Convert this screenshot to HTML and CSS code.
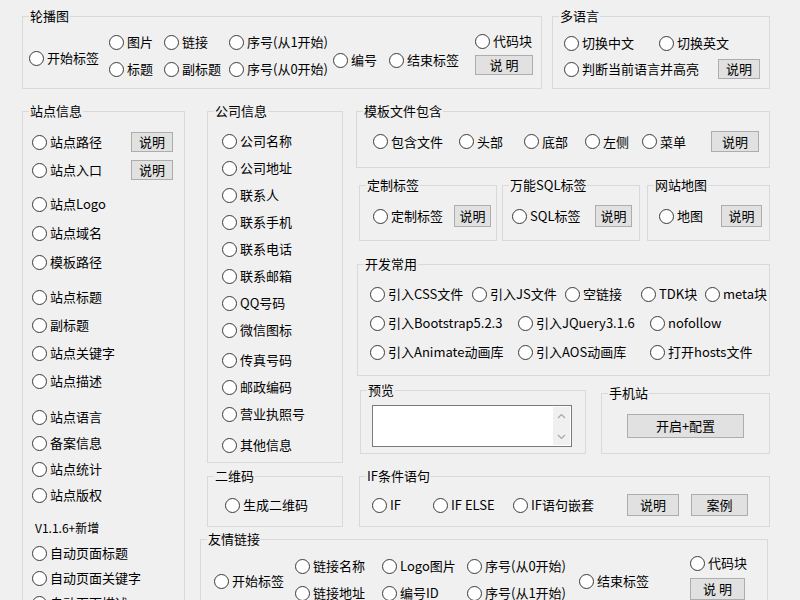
FILE: index.html
```html
<!DOCTYPE html>
<html lang="zh-CN">
<head>
<meta charset="utf-8">
<title>标签生成器</title>
<link rel="stylesheet" href="styles.css">
</head>
<body>
<div class="page">
  <div class="top-row">
    <div class="group carousel">
      <span class="group-title">轮播图</span>
      <div class="carousel-grid">
        <span class="radio span2 drop16">开始标签</span>
        <span class="radio">图片</span>
        <span class="radio">链接</span>
        <span class="radio">序号(从1开始)</span>
        <span class="radio span2c5 drop18">编号</span>
        <span class="radio span2c6 drop18">结束标签</span>
        <div class="code-col">
          <span class="radio">代码块</span>
          <span class="btn btn-code">说 明</span>
        </div>
        <span class="radio r2c2">标题</span>
        <span class="radio r2c3">副标题</span>
        <span class="radio r2c4">序号(从0开始)</span>
      </div>
    </div>
    <div class="group lang">
      <span class="group-title">多语言</span>
      <div class="lang-row">
        <span class="radio w95">切换中文</span>
        <span class="radio">切换英文</span>
      </div>
      <div class="lang-row">
        <span class="radio w154">判断当前语言并高亮</span>
        <span class="btn btn-42">说明</span>
      </div>
    </div>
  </div>

  <div class="main">
    <div class="group site">
      <span class="group-title">站点信息</span>
      <div class="sec sec-1">
        <div class="line"><span class="radio">站点路径</span><span class="btn btn-42">说明</span></div>
        <div class="line"><span class="radio">站点入口</span><span class="btn btn-42">说明</span></div>
      </div>
      <div class="sec sec-2">
        <span class="radio">站点Logo</span>
        <span class="radio">站点域名</span>
        <span class="radio">模板路径</span>
      </div>
      <div class="sec sec-3">
        <span class="radio">站点标题</span>
        <span class="radio">副标题</span>
        <span class="radio">站点关键字</span>
        <span class="radio">站点描述</span>
      </div>
      <div class="sec sec-4">
        <span class="radio">站点语言</span>
        <span class="radio">备案信息</span>
        <span class="radio">站点统计</span>
        <span class="radio">站点版权</span>
      </div>
      <div class="sec sec-5">
        <span class="note">V1.1.6+新增</span>
        <span class="radio">自动页面标题</span>
        <span class="radio">自动页面关键字</span>
        <span class="radio">自动页面描述</span>
      </div>
    </div>

    <div class="right-block">
      <div class="sub-row">
        <div class="mid-col">
          <div class="group company">
            <span class="group-title">公司信息</span>
            <span class="radio">公司名称</span>
            <span class="radio">公司地址</span>
            <span class="radio">联系人</span>
            <span class="radio">联系手机</span>
            <span class="radio">联系电话</span>
            <span class="radio">联系邮箱</span>
            <span class="radio">QQ号码</span>
            <span class="radio">微信图标</span>
            <span class="radio push3">传真号码</span>
            <span class="radio">邮政编码</span>
            <span class="radio">营业执照号</span>
            <span class="radio push4">其他信息</span>
          </div>
          <div class="group qr">
            <span class="group-title">二维码</span>
            <span class="radio">生成二维码</span>
          </div>
        </div>

        <div class="right-col">
          <div class="group tpl">
            <span class="group-title">模板文件包含</span>
            <span class="radio">包含文件</span>
            <span class="radio">头部</span>
            <span class="radio">底部</span>
            <span class="radio">左侧</span>
            <span class="radio">菜单</span>
            <span class="btn btn-tpl">说明</span>
          </div>

          <div class="custom-row">
            <div class="group small custom">
              <span class="group-title">定制标签</span>
              <span class="radio">定制标签</span>
              <span class="btn btn-37">说明</span>
            </div>
            <div class="group small sql">
              <span class="group-title">万能SQL标签</span>
              <span class="radio">SQL标签</span>
              <span class="btn btn-37">说明</span>
            </div>
            <div class="group small sitemap">
              <span class="group-title">网站地图</span>
              <span class="radio">地图</span>
              <span class="btn btn-41">说明</span>
            </div>
          </div>

          <div class="group dev">
            <span class="group-title">开发常用</span>
            <div class="dev-row dev-row-1">
              <span class="radio">引入CSS文件</span>
              <span class="radio">引入JS文件</span>
              <span class="radio">空链接</span>
              <span class="radio">TDK块</span>
              <span class="radio">meta块</span>
            </div>
            <div class="dev-row">
              <span class="radio">引入Bootstrap5.2.3</span>
              <span class="radio">引入JQuery3.1.6</span>
              <span class="radio">nofollow</span>
            </div>
            <div class="dev-row">
              <span class="radio">引入Animate动画库</span>
              <span class="radio">引入AOS动画库</span>
              <span class="radio">打开hosts文件</span>
            </div>
          </div>

          <div class="preview-row">
            <div class="group preview">
              <span class="group-title">预览</span>
              <div class="textbox">
                <div class="textbox-area"></div>
                <div class="scroll">
                  <svg width="9" height="6" viewBox="0 0 9 6"><path d="M1 5 L4.5 1.5 L8 5" fill="none" stroke="#a6a6a6" stroke-width="1.2"/></svg>
                  <svg width="9" height="6" viewBox="0 0 9 6"><path d="M1 1 L4.5 4.5 L8 1" fill="none" stroke="#a6a6a6" stroke-width="1.2"/></svg>
                </div>
              </div>
            </div>
            <div class="group mobile">
              <span class="group-title">手机站</span>
              <span class="btn btn-mobile">开启+配置</span>
            </div>
          </div>

          <div class="group ifs">
            <span class="group-title">IF条件语句</span>
            <span class="radio">IF</span>
            <span class="radio">IF ELSE</span>
            <span class="radio">IF语句嵌套</span>
            <span class="btn btn-52">说明</span>
            <span class="btn btn-57">案例</span>
          </div>
        </div>
      </div>

      <div class="group links">
        <span class="group-title">友情链接</span>
        <div class="links-grid">
          <span class="radio span2 drop15">开始标签</span>
          <span class="radio">链接名称</span>
          <span class="radio">Logo图片</span>
          <span class="radio">序号(从0开始)</span>
          <span class="radio span2c5 drop15">结束标签</span>
          <div class="code-col links-code">
            <span class="radio">代码块</span>
            <span class="btn btn-links">说 明</span>
          </div>
          <span class="radio r2c2">链接地址</span>
          <span class="radio r2c3">编号ID</span>
          <span class="radio r2c4">序号(从1开始)</span>
        </div>
      </div>
    </div>
  </div>
</div>
</body>
</html>
```

FILE: styles.css
```css
* { box-sizing: border-box; }

html, body {
  margin: 0;
  padding: 0;
}

body {
  width: 800px;
  height: 600px;
  overflow: hidden;
  background: #f0f0f0;
  color: #000;
  font-family: "Noto Sans CJK SC", "Microsoft YaHei", sans-serif;
  font-size: 13px;
  line-height: 16px;
}

.page {
  padding: 16px 0 0 22px;
}

/* ---------- shared controls ---------- */
.group {
  position: relative;
  border: 1px solid #d9d9d9;
}

.group-title {
  position: absolute;
  top: -9px;
  left: 6px;
  padding: 0 1px;
  background: #f0f0f0;
  line-height: 16px;
  white-space: nowrap;
}

.radio {
  display: flex;
  align-items: center;
  gap: 3px;
  height: 20px;
  white-space: nowrap;
}

.radio::before {
  content: "";
  flex: none;
  width: 13px;
  height: 13px;
  border: 1px solid #3a3a3a;
  border-radius: 50%;
  background: #fff;
}

.btn {
  display: flex;
  align-items: center;
  justify-content: center;
  height: 20px;
  border: 1px solid #adadad;
  background: #e1e1e1;
  white-space: nowrap;
}

.btn-42 { width: 42px; }
.btn-37 { width: 37px; height: 22px; }
.btn-41 { width: 41px; height: 22px; }
.btn-52 { width: 52px; height: 22px; }
.btn-57 { width: 57px; height: 22px; }
.btn-tpl { width: 48px; height: 21px; }
.btn-code { width: 58px; }
.btn-links { width: 55px; height: 22px; }
.btn-mobile { width: 117px; height: 24px; }

/* ---------- top row ---------- */
.top-row {
  display: flex;
  gap: 10px;
}

.carousel {
  width: 520px;
  height: 73px;
  padding: 15px 0 0 6px;
}

.carousel-grid,
.links-grid {
  display: grid;
  grid-template-rows: 20px 20px;
  row-gap: 7px;
}

.carousel-grid {
  grid-template-columns: 80px 55px 65px 104px 56px 86px auto;
}

.links-grid {
  grid-template-columns: 81px 87px 85px 112px 111px auto;
}

.span2 { grid-column: 1; grid-row: 1 / 3; align-self: start; }
.span2c5 { grid-column: 5; grid-row: 1 / 3; align-self: start; }
.span2c6 { grid-column: 6; grid-row: 1 / 3; align-self: start; }
.r2c2 { grid-row: 2; grid-column: 2; }
.r2c3 { grid-row: 2; grid-column: 3; }
.r2c4 { grid-row: 2; grid-column: 4; }
.drop15 { margin-top: 15px; }
.drop16 { margin-top: 16px; }
.drop18 { margin-top: 18px; }

.code-col {
  grid-row: 1 / 3;
  display: flex;
  flex-direction: column;
  gap: 4px;
  margin-top: -1px;
}

.links-code {
  grid-column: 6;
  margin-top: -3px;
  gap: 5px;
}

.lang {
  width: 218px;
  height: 73px;
  padding: 16px 0 0 11px;
  display: flex;
  flex-direction: column;
  gap: 6px;
}

.lang-row {
  display: flex;
  align-items: center;
}

.w95 { width: 95px; }
.w154 { width: 154px; }

/* ---------- main area ---------- */
.main {
  display: flex;
  gap: 15px;
  margin-top: 22px;
}

.site {
  width: 163px;
  height: 540px;
  padding: 20px 11px 0 9px;
  flex: none;
}

.sec {
  display: flex;
  flex-direction: column;
}

.sec-1 { gap: 8px; }
.sec-2 { gap: 9px; margin-top: 14px; }
.sec-3 { gap: 8px; margin-top: 15px; }
.sec-4 { gap: 6px; margin-top: 16px; }
.sec-5 { gap: 5px; margin-top: 13px; }

.line {
  display: flex;
  align-items: center;
  justify-content: space-between;
}

.note {
  height: 20px;
  display: flex;
  align-items: center;
  padding-left: 3px;
  font-size: 12px;
}

.right-block {
  width: 570px;
  flex: none;
}

.sub-row {
  display: flex;
  gap: 14px;
  padding-left: 7px;
}

.mid-col {
  width: 136px;
  flex: none;
}

.company {
  height: 352px;
  padding: 19px 0 0 14px;
  display: flex;
  flex-direction: column;
  gap: 7px;
}

.push3 { margin-top: 3px; }
.push4 { margin-top: 4px; }

.qr {
  margin-top: 13px;
  height: 51px;
  padding: 18px 0 0 17px;
}

.right-col {
  width: 413px;
  flex: none;
}

.tpl {
  width: 414px;
  height: 57px;
  margin-left: -1px;
  padding: 19px 0 0 16px;
  display: grid;
  grid-template-columns: 86px 65px 61px 57px 69px 48px;
  grid-template-rows: 21px;
  align-items: center;
  align-content: start;
}

.tpl .radio { height: 21px; }

.custom-row {
  display: flex;
  gap: 5px;
  margin-top: 17px;
  padding-left: 2px;
}

.small {
  height: 56px;
  padding-top: 19px;
  display: flex;
  align-items: flex-start;
  justify-content: space-between;
}

.small .radio { height: 22px; }

.custom { width: 138px; padding-left: 13px; padding-right: 5px; }
.sql { width: 138px; padding-left: 9px; padding-right: 7px; }
.sitemap { width: 123px; margin-left: 2px; padding-left: 11px; padding-right: 7px; }

.dev {
  margin-top: 23px;
  height: 112px;
  padding: 19px 0 0 12px;
  display: flex;
  flex-direction: column;
  gap: 9px;
}

.dev-row {
  display: grid;
  grid-template-columns: 148px 132px auto;
}

.dev-row-1 {
  grid-template-columns: 102px 93px 76px 64px auto;
}

.preview-row {
  display: flex;
  align-items: flex-end;
  gap: 15px;
  margin-top: 14px;
  padding-left: 3px;
}

.preview {
  width: 226px;
  height: 64px;
  padding: 14px 0 0 11px;
}

.textbox {
  width: 200px;
  height: 42px;
  border: 1px solid #7a7a7a;
  background: #fff;
  display: flex;
}

.textbox-area {
  flex: 1;
}

.scroll {
  width: 17px;
  margin: 1px 1px 1px 0;
  background: #f0f0f0;
  display: flex;
  flex-direction: column;
  align-items: center;
  justify-content: space-between;
  padding: 6px 0 5px;
}

.scroll svg { display: block; }

.mobile {
  width: 169px;
  height: 61px;
  padding: 20px 0 0 25px;
}

.ifs {
  margin-top: 22px;
  margin-left: 2px;
  width: 411px;
  height: 51px;
  padding: 17px 0 0 12px;
  display: grid;
  grid-template-columns: 61px 80px 114px 64px auto;
  align-items: center;
  align-content: start;
}

.ifs .radio { height: 22px; }

.links {
  margin-top: 12px;
  width: 568px;
  height: 80px;
  padding: 16px 0 0 13px;
}
```
